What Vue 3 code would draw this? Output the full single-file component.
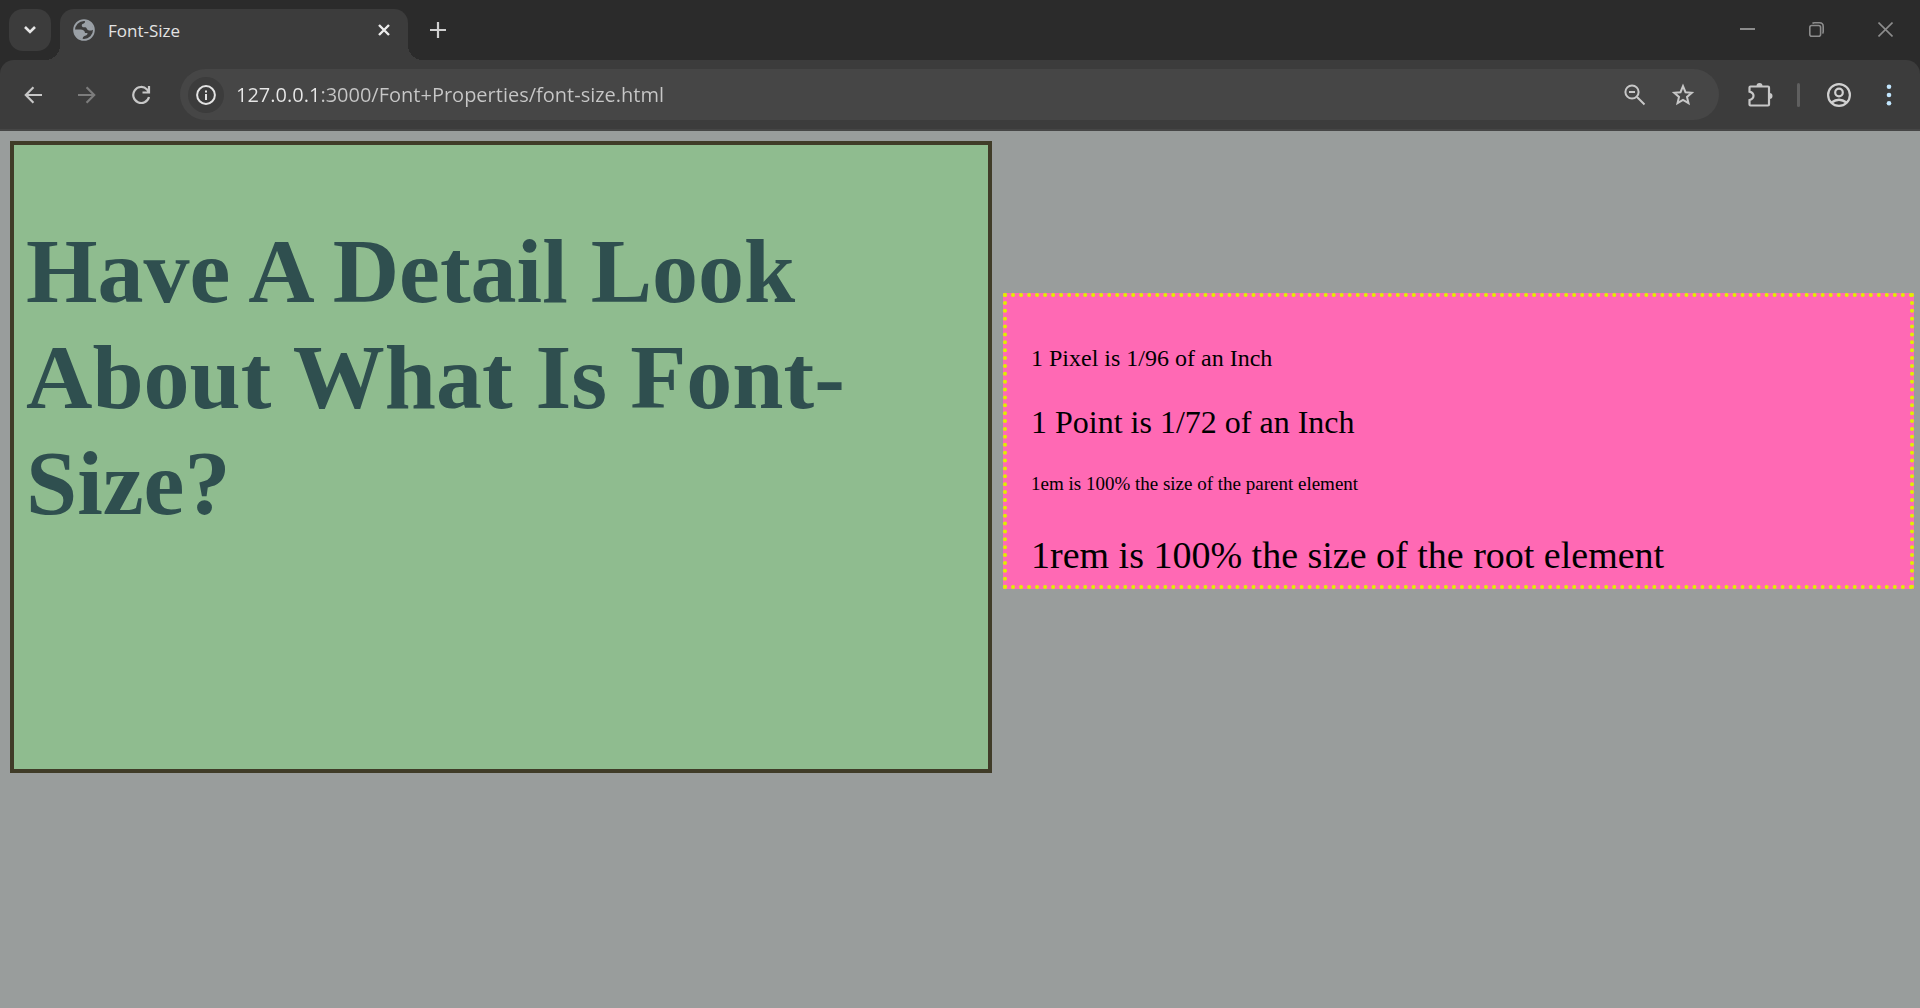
<script setup>
import { ref } from 'vue'

const address = ref('127.0.0.1:3000/Font+Properties/font-size.html')
const facts = [
  { text: '1 Pixel is 1/96 of an Inch', unit: 'px' },
  { text: '1 Point is 1/72 of an Inch', unit: 'pt' },
  { text: '1em is 100% the size of the parent element', unit: 'em' },
  { text: '1rem is 100% the size of the root element', unit: 'rem' }
]
</script>

<template>
  <div class="browser">
    <div class="chrome">
      <header class="tabstrip">
        <button class="tab-search" aria-label="Search tabs">
          <svg width="14" height="10" viewBox="0 0 14 10"><path d="M2 2l5 5 5-5" fill="none" stroke="#e6e6e6" stroke-width="2.6" /></svg>
        </button>
        <div class="tab">
          <svg width="22" height="22" viewBox="0 0 22 22">
            <circle cx="11" cy="11" r="9.9" fill="none" stroke="#9aa0a6" stroke-width="1.8" />
            <path d="M12 1.5C12.5 3.5 11.5 4.5 9.5 5C8.5 5.300 8.5 7.5 9.5 8C11 8.5 13 7.5 13.5 9C14 11 15.5 11.5 17.5 11.5C18.5 11.5 20 11 20.5 10.5A9.5 9.5 0 0 0 12 1.5Z" fill="#9aa0a6" />
            <path d="M1.5 10.5H7.5C10 10.5 12 12 12 14H14.5C14.5 16 13.5 16.5 11.5 17C10.5 17.3 9.5 18.5 9.5 20.5A9.5 9.5 0 0 1 1.5 10.5Z" fill="#9aa0a6" />
          </svg>
          <span class="tab-title">Font-Size</span>
          <button class="icon-button small" aria-label="Close tab">
            <svg width="14" height="14" viewBox="0 0 14 14"><path d="M2 2l10 10M12 2L2 12" stroke="#ececec" stroke-width="2.4" /></svg>
          </button>
        </div>
        <button class="icon-button new-tab" aria-label="New tab">
          <svg width="16" height="16" viewBox="0 0 16 16"><path d="M8 0v16M0 8h16" stroke="#d0d0d0" stroke-width="2.2" /></svg>
        </button>
        <div class="window-controls">
          <button aria-label="Minimize"><svg width="15" height="15" viewBox="0 0 15 15"><path d="M0 7h15" stroke="#8c8c8c" stroke-width="2" /></svg></button>
          <button aria-label="Restore">
            <svg width="15" height="15" viewBox="0 0 15 15" fill="none" stroke="#8c8c8c" stroke-width="1.6">
              <rect x="0.8" y="3.5" width="10.8" height="10.7" rx="2" />
              <path d="M3.5 1.5Q4 .8 5.5 .8H10.5Q14.2 .8 14.2 4.5V9.5Q14.2 11 13.5 11.5" />
            </svg>
          </button>
          <button aria-label="Close"><svg width="15" height="15" viewBox="0 0 15 15"><path d="M.5.5l14 14M14.5.5l-14 14" stroke="#8c8c8c" stroke-width="1.6" /></svg></button>
        </div>
      </header>

      <nav class="toolbar">
        <div class="history">
          <button class="icon-button" aria-label="Back">
            <svg width="18" height="18" viewBox="0 0 20 20"><path d="M20 10H2.5M10.500 1.5L2 10l8.500 8.5" fill="none" stroke="#c7c7c7" stroke-width="2.4" /></svg>
          </button>
          <button class="icon-button" aria-label="Forward" disabled>
            <svg width="18" height="18" viewBox="0 0 20 20"><path d="M0 10h17.500M9.500 1.500L18 10l-8.500 8.500" fill="none" stroke="#7c7c7c" stroke-width="2.400" /></svg>
          </button>
          <button class="icon-button" aria-label="Reload">
            <svg width="20" height="20" viewBox="0 0 20 20"><path d="M18 12A8 8 0 1 1 16 4.400L17.500 6.500M18 1v6.500h-6.500" fill="none" stroke="#c7c7c7" stroke-width="2.200" /></svg>
          </button>
        </div>
        <div class="omnibox">
          <button class="site-info" aria-label="View site information">
            <svg width="20" height="20" viewBox="0 0 20 20"><circle cx="10" cy="10" r="8.900" fill="none" stroke="#e3e3e3" stroke-width="2" /><path d="M10 9v6M10 5.400v2" stroke="#e3e3e3" stroke-width="2" /></svg>
          </button>
          <input v-model="address" class="address" type="text" aria-label="Address" spellcheck="false">
          <button class="icon-button" aria-label="Zoom">
            <svg width="22" height="22" viewBox="0 0 22 22" fill="none" stroke="#c7c7c7" stroke-width="2"><circle cx="8" cy="8" r="6.600" /><path d="M13 13l7.500 7.500M5 8h6" /></svg>
          </button>
          <button class="icon-button" aria-label="Bookmark this tab">
            <svg width="24" height="24" viewBox="0 0 24 24"><path d="M12 3.200l2.500 6 6.300.5-4.800 4.200 1.500 6.300L12 16.900 6.500 20.200 8 13.900 3.200 9.700l6.300-.5z" fill="none" stroke="#c7c7c7" stroke-width="2" /></svg>
          </button>
        </div>
        <button class="icon-button" aria-label="Extensions">
          <svg width="26" height="28" viewBox="0 0 26 28">
            <path d="M3.500 5.500H21Q22 5.500 22 6.500V23.500Q22 24.500 21 24.500H3.500Q2.500 24.500 2.500 23.500V19Q6.500 18 6.500 14.800T2.500 10.600V6.500Q2.500 5.500 3.500 5.500Z" fill="none" stroke="#c7c7c7" stroke-width="2.200" />
            <path d="M9.500 5a3 3 0 0 1 6 0zM22.500 12a3 3 0 0 1 0 6z" fill="#c7c7c7" />
          </svg>
        </button>
        <span class="divider"></span>
        <button class="icon-button" aria-label="Profile">
          <svg width="24" height="24" viewBox="0 0 24 24" fill="none" stroke="#d0d0d0" stroke-width="2.200"><circle cx="12" cy="12" r="10.900" /><circle cx="12" cy="9.500" r="3.800" /><path d="M4.500 19.500Q12 14 19.500 19.500" /></svg>
        </button>
        <button class="icon-button menu" aria-label="Menu">
          <svg width="6" height="22" viewBox="0 0 6 22" fill="#c2e7ff"><circle cx="3" cy="2.800" r="2.300" /><circle cx="3" cy="11" r="2.300" /><circle cx="3" cy="19.200" r="2.300" /></svg>
        </button>
      </nav>
    </div>

    <main class="page">
      <section class="intro">
        <h1>Have A Detail Look About What Is Font-Size?</h1>
      </section>
      <section class="facts">
        <p v-for="fact in facts" :key="fact.unit" :class="fact.unit">{{ fact.text }}</p>
      </section>
    </main>
  </div>
</template>

<style>
body {
  background: #999d9c;
}
</style>

<style scoped>
.browser {
  min-height: 100vh;
  background: #999d9c;
}

.chrome {
  background: #2b2b2b;
}

button {
  display: flex;
  align-items: center;
  justify-content: center;
  flex: none;
  padding: 0;
  border: 0;
  background: none;
}

.icon-button {
  width: 36px;
  height: 36px;
}

.tabstrip {
  display: flex;
  align-items: flex-start;
  height: 60px;
  padding-left: 9px;
  box-sizing: border-box;
}

.tab-search {
  width: 42px;
  height: 42px;
  margin-top: 9px;
  border-radius: 14px;
  background: #3c3c3c;
}

.tab {
  position: relative;
  display: flex;
  align-items: center;
  width: 348px;
  height: 51px;
  margin: 9px 0 0 9px;
  padding: 0 15px 9px 13px;
  box-sizing: border-box;
  border-radius: 14px 14px 0 0;
  background: #3c3c3c;
}

.tab::before,
.tab::after {
  content: '';
  position: absolute;
  bottom: 0;
  width: 15px;
  height: 15px;
}

.tab::before {
  right: 100%;
  background: radial-gradient(circle at 0 0, transparent 15px, #3c3c3c 15px);
}

.tab::after {
  left: 100%;
  background: radial-gradient(circle at 100% 0, transparent 15px, #3c3c3c 15px);
}

.tab-title {
  flex: 1;
  margin-left: 13px;
  padding-top: 2px;
  color: #e3e3e3;
  font: 17px/24px "Open Sans", "Noto Sans", sans-serif;
}

.small {
  width: 18px;
}

.new-tab {
  margin: 12px 0 0 12px;
}

.window-controls {
  display: flex;
  margin-left: auto;
}

.window-controls button {
  width: 69px;
  height: 59px;
}

.toolbar {
  display: flex;
  align-items: center;
  height: 71px;
  padding: 0 13px 0 15px;
  box-sizing: border-box;
  border-bottom: 2px solid #464646;
  border-radius: 14px 14px 0 0;
  background: #3c3c3c;
}

.history {
  display: flex;
  gap: 18px;
  margin-right: 21px;
}

.omnibox {
  display: flex;
  align-items: center;
  flex: 1;
  gap: 12px;
  height: 51px;
  margin-right: 23px;
  padding: 0 18px 0 8px;
  border-radius: 26px;
  background: #464646;
}

.site-info {
  width: 36px;
  height: 36px;
  border-radius: 50%;
  background: #3c3c3c;
}

.address {
  flex: 1;
  min-width: 0;
  height: 36px;
  padding: 0;
  border: 0;
  outline: 0;
  background: linear-gradient(90deg, #e8e8e8 82px, #c7c7c7 82px);
  background-clip: text;
  color: transparent;
  font: 20px/36px "Open Sans", "Noto Sans", sans-serif;
}

.divider {
  width: 3px;
  height: 24px;
  margin: 0 21px 0 19px;
  border-radius: 2px;
  background: #5f5f5f;
}

.menu {
  margin-left: 14px;
}

.page {
  display: grid;
  grid-template-columns: 982fr 911fr;
  align-items: start;
  gap: 11px;
  padding: 10px 6px 10px 10px;
  font-family: "Liberation Serif", "Times New Roman", serif;
}

.intro {
  min-height: 632px;
  padding: 12px;
  box-sizing: border-box;
  border: 4px solid #403c28;
  background: #8fbc8f;
}

h1 {
  margin: 61px 0;
  color: #2f4f4f;
  font-size: 92px;
  line-height: 106px;
}

.facts {
  margin-top: 152px;
  padding: 23px 24px 8px;
  border: 4px dotted #dff000;
  background: #ff69b4;
  color: #000;
}

.facts p {
  margin: 0;
}

.facts .px {
  margin-top: 24px;
  font-size: 24px;
  line-height: 28px;
}

.facts .pt {
  margin-top: 32px;
  font-size: 32px;
  line-height: 36px;
}

.facts .em {
  margin-top: 32px;
  font-size: 19px;
  line-height: 24px;
}

.facts .rem {
  margin-top: 37px;
  font-size: 38px;
  line-height: 44px;
}
</style>
